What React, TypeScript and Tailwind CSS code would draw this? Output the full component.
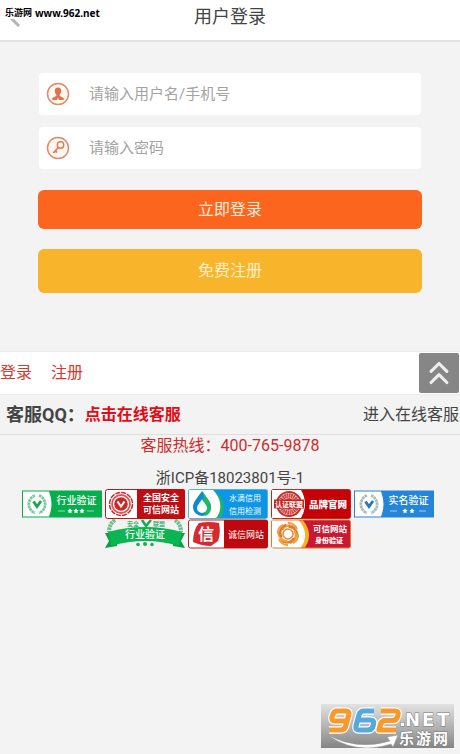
import React from "react";
import { ChevronsUp } from "lucide-react";

const CJK = '"Noto Sans CJK SC", sans-serif';

type BadgeProps = { label: string; children: React.ReactNode };

function Badge({ label, children }: BadgeProps) {
  return (
    <a href="#verify" aria-label={label} className="block h-[30px] w-20">
      <svg viewBox="0 0 80 30" className="block h-full w-full" fontFamily={CJK}>
        {children}
      </svg>
    </a>
  );
}

function Star({ x, y, r = 2 }: { x: number; y: number; r?: number }) {
  const points = Array.from({ length: 10 }, (_, i) => {
    const radius = i % 2 ? r * 0.5 : r;
    const angle = (Math.PI * i) / 5 - Math.PI / 2;
    return `${x + radius * Math.cos(angle)},${y + radius * Math.sin(angle)}`;
  }).join(" ");
  return <polygon points={points} fill="#fff" />;
}

function Laurel({ color, check }: { color: string; check: string }) {
  return (
    <g fill="none">
      <path d="M13 6.500a9.300 9.300 0 0 0 0 17.500M17 6.500a9.300 9.300 0 0 1 0 17.500" stroke={color} strokeWidth="2.800" strokeDasharray="2.600 .5" />
      <path d="M11.500 12.500l3.500 5 4-5.500" stroke={check} strokeWidth="2.800" />
    </g>
  );
}

function LaurelBadge({ text, fill, laurel, check, stars }: { text: string; fill: string; laurel: string; check: string; stars: number[] }) {
  return (
    <Badge label={text}>
      <rect x=".5" y="2" width="79" height="26" fill={fill} stroke={fill} />
      <path d="M1 2.500h26q5 12.500 0 25H1z" fill="#fff" />
      <Laurel color={laurel} check={check} />
      <text x="54.500" y="15" fontSize="10" fontWeight="500" fill="#fff" textAnchor="middle">{text}</text>
      <path d="M36 22h7M65 22h7" stroke="#fff" strokeOpacity=".6" />
      {stars.map((x) => <Star key={x} x={x} y={22} r={2.800} />)}
    </Badge>
  );
}

function SafeSiteBadge() {
  return (
    <Badge label="全国安全可信网站">
      <rect x=".5" y=".5" width="79" height="29" rx="2" fill="#fff" stroke="#bd1a1c" />
      <path d="M32 0h46q2 0 2 2v26q0 2-2 2H32z" fill="#bf0d14" />
      <circle cx="16" cy="15" r="11.500" fill="none" stroke="#c62b2c" strokeWidth="1.500" strokeDasharray="5 1" />
      <circle cx="16" cy="15" r="9" fill="none" stroke="#d25a58" strokeWidth="1.800" />
      <circle cx="16" cy="15" r="6.800" fill="#c62b2c" />
      <path d="M12.500 12.500l3.500 5 3.500-5" fill="none" stroke="#fff" strokeWidth="2" />
      <text x="56" y="12" fontSize="9" fontWeight="700" fill="#fff" textAnchor="middle">全国安全</text>
      <text x="56" y="24" fontSize="9" fontWeight="700" fill="#fff" textAnchor="middle">可信网站</text>
    </Badge>
  );
}

function WaterBadge() {
  return (
    <Badge label="水滴信用 信用检测">
      <rect x=".5" y=".5" width="79" height="29" rx="2" fill="#0d96e6" stroke="#54b2d9" />
      <path d="M1 1h24c12 8 13 20 7 28H1z" fill="#17b968" />
      <path d="M1 1h24c8 8 10 20 3 28H1z" fill="#fff" />
      <path d="M14 2c-4 6-9 11-9 16a9 9 0 0 0 18 0c0-5-5-10-9-16z" fill="#0a8bd6" />
      <path d="M15 3c4 6 8 10 8 15a9 9 0 0 1-6 9z" fill="#21b66a" />
      <path d="M14 10c-2 4-5 6-5 9a5 5 0 0 0 10 0c0-3-3-5-5-9z" fill="#fff" />
      <text x="57" y="12" fontSize="8" fill="#fff" textAnchor="middle">水滴信用</text>
      <text x="57" y="24.500" fontSize="8" fill="#fff" textAnchor="middle">信用检测</text>
    </Badge>
  );
}

function BrandBadge() {
  return (
    <Badge label="认证联盟 品牌官网">
      <rect x=".5" y=".5" width="79" height="29" rx="2" fill="#c70008" stroke="#bb2920" />
      <path d="M1 1h29q8 14 0 28H1z" fill="#fff" />
      <circle cx="18" cy="15" r="12" fill="none" stroke="#c52e2b" strokeWidth="2" />
      <circle cx="18" cy="15" r="8.500" fill="none" stroke="#cc4541" strokeWidth="4.500" strokeDasharray="1.800 .4" />
      <circle cx="18" cy="15" r="6" fill="#cc4541" />
      <path d="M3 10.500h30v9H3z" fill="#c42422" />
      <text x="18" y="17.500" fontSize="7" fontWeight="700" fill="#fff" textAnchor="middle">认证联盟</text>
      <text x="57" y="18.500" fontSize="9.500" fontWeight="900" fill="#fff" textAnchor="middle">品牌官网</text>
    </Badge>
  );
}

function RibbonBadge() {
  return (
    <Badge label="安全联盟 行业验证">
      <path d="M10 1q-6 4-6 12M70 1q6 4 6 12" fill="none" stroke="#67c18a" strokeWidth="4" strokeDasharray="2.500 .7" />
      <path d="M0 14h12v13L0 29l4-7zM80 14H68v13l12 2-4-7z" fill="#0c9d45" />
      <path d="M3 13Q40 3 77 13l-3 14Q40 17 6 27z" fill="#0bb551" />
      <text x="28" y="7" fontSize="6" fontWeight="700" fill="#3fb872" textAnchor="middle">安全</text>
      <text x="54" y="7" fontSize="6" fontWeight="700" fill="#3fb872" textAnchor="middle">联盟</text>
      <path d="M37 1l4 6 5-6" fill="none" stroke="#0baf4e" strokeWidth="2.500" />
      <text x="40" y="19" fontSize="10" fontWeight="500" fill="#fff" textAnchor="middle">行业验证</text>
      <g fill="#1bac58">
        <circle cx="33" cy="25.500" r="1.800" />
        <circle cx="40" cy="25" r="2" />
        <circle cx="47" cy="25.500" r="1.800" />
      </g>
    </Badge>
  );
}

function HonestBadge() {
  return (
    <Badge label="诚信网站">
      <rect x=".5" y="1" width="79" height="28" rx="2" fill="#fff" stroke="#b72522" />
      <path d="M36 1h42q2 0 2 2v24q0 2-2 2H36z" fill="#bf080e" />
      <path d="M11 4q10-2 20 0 2 10-1 18l-7 5q-9 0-18-4 0-12 6-19z" fill="#d52a30" />
      <text x="18" y="21" fontSize="16" fontWeight="700" fill="#fff" textAnchor="middle">信</text>
      <text x="58" y="18.500" fontSize="9" fill="#fff" textAnchor="middle">诚信网站</text>
    </Badge>
  );
}

function TrustBadge() {
  return (
    <Badge label="可信网站 身份验证">
      <rect x=".5" y="1" width="79" height="28" rx="2" fill="#cc1733" stroke="#d4812e" />
      <path d="M1 1.500h31q11 13 2 27H1z" fill="#f6b226" />
      <path d="M1 1.500h27q11 13 2 27H1z" fill="#fff" />
      <g fill="none" strokeWidth="2.400">
        {[0, 60, 120, 180, 240, 300].map((a) => (
          <path key={a} d="M11 11a8 8 0 0 1 13-2" transform={`rotate(${a} 17 15)`} stroke={a % 120 ? "#e7762f" : "#efa332"} />
        ))}
        <path d="M17 4a9 9 0 0 1 9 6M27 15a9 9 0 0 1-5 9M17 26a9 9 0 0 1-9-6M7 15a9 9 0 0 1 5-9" stroke="#eda04a" strokeWidth="2" />
        <circle cx="17" cy="15" r="5" stroke="#e98a32" strokeWidth="1.500" fill="#fff" />
      </g>
      <text x="59" y="12.500" fontSize="8.500" fontWeight="700" fill="#fff" textAnchor="middle">可信网站</text>
      <text x="58" y="23.500" fontSize="7" fontWeight="900" fill="#fff" textAnchor="middle">身份验证</text>
    </Badge>
  );
}

function UserIcon() {
  return (
    <svg viewBox="0 0 24 24" className="size-6 shrink-0" aria-hidden="true">
      <circle cx="12" cy="12" r="10.500" fill="#fff8f2" stroke="#dc8c69" strokeWidth="1.500" />
      <path d="M12 5.500c-2.200 0-3.300 1.500-3.200 3.500.1 1.800.8 2.800 1.500 3.500v1.500l-4 2v2h4.700l1-2.500 1 2.500h4.700v-2l-4-2v-1.500c.7-.7 1.400-1.700 1.500-3.500.1-2-1-3.500-3.200-3.500z" fill="#df7246" />
    </svg>
  );
}

function KeyIcon() {
  return (
    <svg viewBox="0 0 24 24" className="size-6 shrink-0" aria-hidden="true">
      <circle cx="12" cy="12" r="10.500" fill="#fff8f2" stroke="#dc8c69" strokeWidth="1.500" />
      <g fill="none" stroke="#df7f58">
        <circle cx="14.500" cy="9" r="3.200" strokeWidth="1.500" />
        <path d="M12.300 11.500l-5 5.500M9 14.500l2 2" strokeWidth="1.800" />
      </g>
    </svg>
  );
}

function Field({ id, label, type, icon }: { id: string; label: string; type: string; icon: React.ReactNode }) {
  return (
    <div className="mx-px flex h-[42px] items-center rounded bg-white pl-[7px]">
      <label htmlFor={id} aria-label={label}>{icon}</label>
      <input
        id={id}
        type={type}
        placeholder={label}
        className="ml-[19px] h-full min-w-0 flex-1 bg-transparent text-[15px] outline-none placeholder:text-[#a3a3a3]"
      />
    </div>
  );
}

function SiteLogo() {
  const digits = [
    { d: "M25 17H14q-4 0-3-4l.7-2q1-4 5-4h8q4 0 3 4l-3 11q-1 4-5 4H8", color: "#f8992b" },
    { d: "M53 7H43q-4 0-5 4l-3 11q-1 4 3 4h9q4 0 5-4l.500-2q1-4-3-4H37", color: "#55a9db" },
    { d: "M60 7h14q4 0 3 4l-.5 1.500q-1 4-5 4h-7q-4 0-5 4l-1.500 5.500h17", color: "#f8992b" },
  ];
  return (
    <svg viewBox="0 0 133 44" className="h-11 w-[133px]" role="img" aria-label="962.NET 乐游网">
      <defs>
        <linearGradient id="plate" x2="0" y2="1">
          <stop stopColor="#e2e2e2" />
          <stop offset=".55" stopColor="#b0b0b0" />
          <stop offset="1" stopColor="#858585" />
        </linearGradient>
      </defs>
      <rect width="133" height="44" fill="url(#plate)" />
      <g fill="none" strokeLinejoin="round">
        {digits.map(({ d, color }) => (
          <g key={d}>
            <path d={d} stroke="#fff" strokeWidth="7.500" />
            <path d={d} stroke={color} strokeWidth="5.200" />
          </g>
        ))}
      </g>
      <path d="M7 31Q36 47 69 37l-3-4 11-2-5 12-2-3Q34 51 7 31z" fill="#fff" stroke="#999" strokeWidth=".5" />
      <g fill="#fff" stroke="#777" strokeWidth="1" paintOrder="stroke" fontWeight="700">
        <text y="22" fontSize="18" fontFamily='"DejaVu Sans", sans-serif'>
          <tspan x="78">.</tspan>
          <tspan x="84">N</tspan>
          <tspan x="101">E</tspan>
          <tspan x="116">T</tspan>
        </text>
        <text y="40" fontSize="15" fontFamily={CJK}>
          <tspan x="78">乐</tspan>
          <tspan x="95">游</tspan>
          <tspan x="112">网</tspan>
        </text>
      </g>
    </svg>
  );
}

export default function App() {
  return (
    <div className="relative flex min-h-screen flex-col bg-[#f3f3f3] font-[Roboto,'Noto_Sans_CJK_SC',sans-serif] text-base text-[#444]">
      <header className="relative flex h-[42px] items-start justify-center border-b-2 border-[#e4e4e4] bg-white pt-1">
        <button type="button" aria-label="返回" className="absolute top-[9px] left-[7px]">
          <svg viewBox="0 0 16 20" className="h-5 w-4">
            <path d="M12 1L4 9l8 8" fill="none" stroke="#b4b4b4" strokeWidth="3" />
          </svg>
        </button>
        <h1 className="text-lg leading-[26px]">用户登录</h1>
        <p className="absolute top-0 left-0 flex h-[19px] items-end gap-[3px] bg-white pl-[5px] font-['Noto_Sans','Noto_Sans_CJK_SC',sans-serif] text-[9px] leading-3 font-bold text-black">
          <span>乐游网</span>
          <span className="text-[10px]">www.962.net</span>
        </p>
      </header>

      <main>
        <form className="mx-[38px] flex flex-col pt-[31px]" onSubmit={(e) => e.preventDefault()}>
          <div className="flex flex-col gap-3">
            <Field id="user" label="请输入用户名/手机号" type="text" icon={<UserIcon />} />
            <Field id="password" label="请输入密码" type="password" icon={<KeyIcon />} />
          </div>
          <button type="submit" className="mt-[21px] h-[39px] rounded-md bg-[#fb651d] text-[#ffeadb]">立即登录</button>
          <button type="button" className="mt-5 h-11 rounded-md bg-[#f8b52b] text-[#fff0c8]">免费注册</button>
        </form>
      </main>

      <footer className="mt-[58px]">
        <nav className="flex h-11 items-center border-y border-[#ebebeb] bg-white text-[#d43a2f]">
          <a href="#login">登录</a>
          <a href="#register" className="ml-[19px]">注册</a>
          <a href="#top" aria-label="返回顶部" className="mr-px ml-auto flex size-10 items-center justify-center rounded-xs bg-[#868686] text-[#eee]">
            <ChevronsUp size={38} strokeWidth={2} />
          </a>
        </nav>
        <div className="flex h-10 items-center border-b border-[#dfdfdf] pr-px pl-1.5">
          <strong className="text-lg">客服QQ：</strong>
          <a href="#qq" className="font-bold text-[#e20b17]">点击在线客服</a>
          <a href="#service" className="ml-auto">进入在线客服</a>
        </div>
        <p className="text-center leading-[22px] text-[#cf2d2d]">客服热线：400-765-9878</p>
        <p className="mt-2.5 text-center text-[15px] leading-[22px]">浙ICP备18023801号-1</p>
        <div className="flex flex-wrap justify-center gap-x-[3px] pr-5 pl-4">
          <LaurelBadge text="行业验证" fill="#07ae4c" laurel="#78c99a" check="#19a455" stars={[48, 54, 60]} />
          <SafeSiteBadge />
          <WaterBadge />
          <BrandBadge />
          <LaurelBadge text="实名验证" fill="#2485d9" laurel="#a7b9c5" check="#2079bd" stars={[51, 58]} />
          <RibbonBadge />
          <HonestBadge />
          <TrustBadge />
        </div>
      </footer>

      <div className="absolute right-1.5 bottom-1.5">
        <SiteLogo />
      </div>
    </div>
  );
}
